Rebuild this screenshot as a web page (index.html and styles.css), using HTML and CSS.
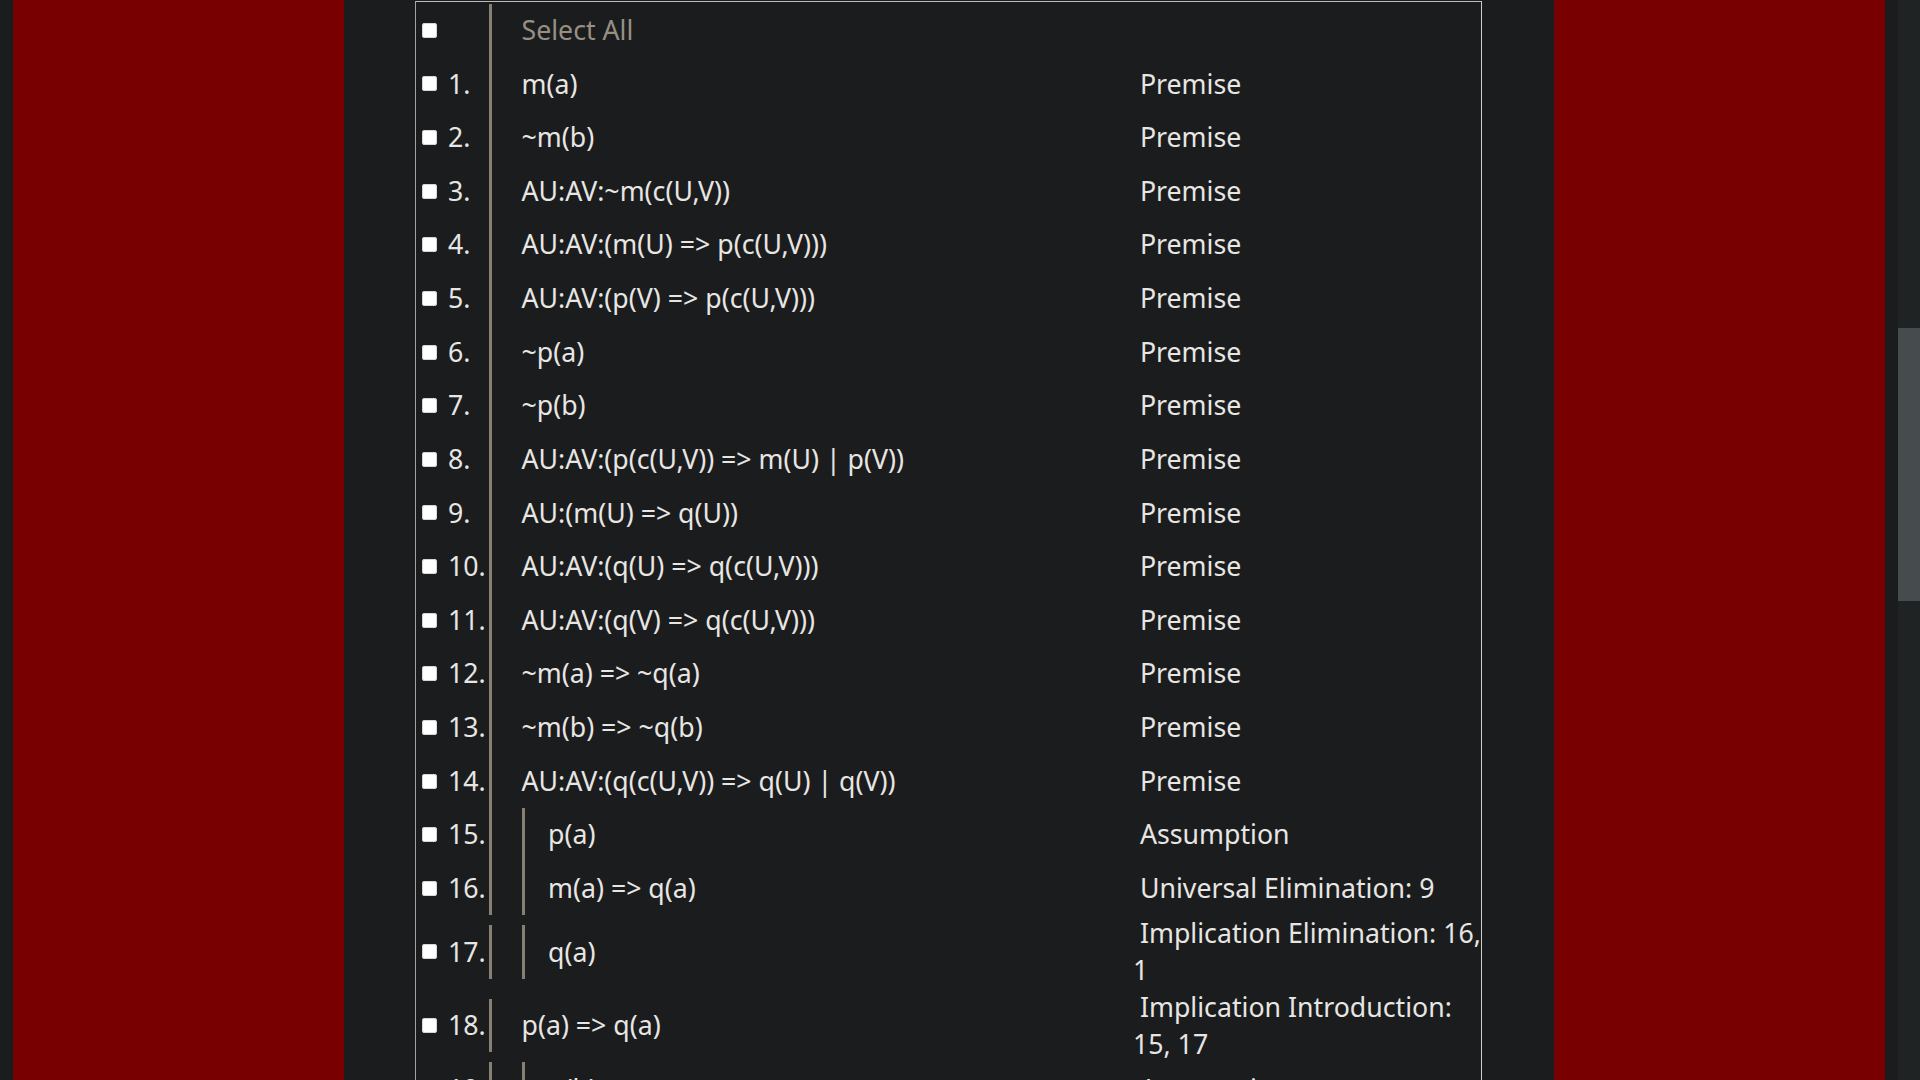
FILE: index.html
```html
<!DOCTYPE html>
<html lang="en">
<head>
<meta charset="utf-8">
<title>Proof</title>
<link rel="stylesheet" href="styles.css">
</head>
<body>
<div class="page">
  <div class="edge"></div>
  <div class="red"></div>
  <div class="gap"></div>
  <div class="proof">
    <div class="row">
      <div class="sel"><span class="box"></span></div>
      <div class="formula"><span class="all">Select All</span></div>
      <div class="just"></div>
    </div>
    <div class="row">
      <div class="sel"><span class="box"></span><span class="num">1.</span></div>
      <div class="formula">m(a)</div>
      <div class="just">&nbsp;Premise</div>
    </div>
    <div class="row">
      <div class="sel"><span class="box"></span><span class="num">2.</span></div>
      <div class="formula">~m(b)</div>
      <div class="just">&nbsp;Premise</div>
    </div>
    <div class="row">
      <div class="sel"><span class="box"></span><span class="num">3.</span></div>
      <div class="formula">AU:AV:~m(c(U,V))</div>
      <div class="just">&nbsp;Premise</div>
    </div>
    <div class="row">
      <div class="sel"><span class="box"></span><span class="num">4.</span></div>
      <div class="formula">AU:AV:(m(U) =&gt; p(c(U,V)))</div>
      <div class="just">&nbsp;Premise</div>
    </div>
    <div class="row">
      <div class="sel"><span class="box"></span><span class="num">5.</span></div>
      <div class="formula">AU:AV:(p(V) =&gt; p(c(U,V)))</div>
      <div class="just">&nbsp;Premise</div>
    </div>
    <div class="row">
      <div class="sel"><span class="box"></span><span class="num">6.</span></div>
      <div class="formula">~p(a)</div>
      <div class="just">&nbsp;Premise</div>
    </div>
    <div class="row">
      <div class="sel"><span class="box"></span><span class="num">7.</span></div>
      <div class="formula">~p(b)</div>
      <div class="just">&nbsp;Premise</div>
    </div>
    <div class="row">
      <div class="sel"><span class="box"></span><span class="num">8.</span></div>
      <div class="formula">AU:AV:(p(c(U,V)) =&gt; m(U) | p(V))</div>
      <div class="just">&nbsp;Premise</div>
    </div>
    <div class="row">
      <div class="sel"><span class="box"></span><span class="num">9.</span></div>
      <div class="formula">AU:(m(U) =&gt; q(U))</div>
      <div class="just">&nbsp;Premise</div>
    </div>
    <div class="row">
      <div class="sel"><span class="box"></span><span class="num">10.</span></div>
      <div class="formula">AU:AV:(q(U) =&gt; q(c(U,V)))</div>
      <div class="just">&nbsp;Premise</div>
    </div>
    <div class="row">
      <div class="sel"><span class="box"></span><span class="num">11.</span></div>
      <div class="formula">AU:AV:(q(V) =&gt; q(c(U,V)))</div>
      <div class="just">&nbsp;Premise</div>
    </div>
    <div class="row">
      <div class="sel"><span class="box"></span><span class="num">12.</span></div>
      <div class="formula">~m(a) =&gt; ~q(a)</div>
      <div class="just">&nbsp;Premise</div>
    </div>
    <div class="row">
      <div class="sel"><span class="box"></span><span class="num">13.</span></div>
      <div class="formula">~m(b) =&gt; ~q(b)</div>
      <div class="just">&nbsp;Premise</div>
    </div>
    <div class="row">
      <div class="sel"><span class="box"></span><span class="num">14.</span></div>
      <div class="formula">AU:AV:(q(c(U,V)) =&gt; q(U) | q(V))</div>
      <div class="just">&nbsp;Premise</div>
    </div>
    <div class="row">
      <div class="sel"><span class="box"></span><span class="num">15.</span></div>
      <div class="formula"><div class="nest">p(a)</div></div>
      <div class="just">&nbsp;Assumption</div>
    </div>
    <div class="row">
      <div class="sel"><span class="box"></span><span class="num">16.</span></div>
      <div class="formula"><div class="nest">m(a) =&gt; q(a)</div></div>
      <div class="just">&nbsp;Universal Elimination: 9</div>
    </div>
    <div class="row">
      <div class="sel"><span class="box"></span><span class="num">17.</span></div>
      <div class="formula"><div class="nest">q(a)</div></div>
      <div class="just">&nbsp;Implication Elimination: 16, 1</div>
    </div>
    <div class="row">
      <div class="sel"><span class="box"></span><span class="num">18.</span></div>
      <div class="formula">p(a) =&gt; q(a)</div>
      <div class="just">&nbsp;Implication Introduction: 15, 17</div>
    </div>
    <div class="row">
      <div class="sel"><span class="box"></span><span class="num">19.</span></div>
      <div class="formula"><div class="nest">p(b)</div></div>
      <div class="just">&nbsp;Assumption</div>
    </div>
    <div class="row">
      <div class="sel"><span class="box"></span><span class="num">20.</span></div>
      <div class="formula"><div class="nest">m(b) =&gt; q(b)</div></div>
      <div class="just">&nbsp;Universal Elimination: 9</div>
    </div>
  </div>
  <div class="gap gap-right"></div>
  <div class="red"></div>
  <div class="edge"></div>
  <div class="scroll"><div class="thumb"></div></div>
</div>
</body>
</html>
```

FILE: styles.css
```css
* {
  box-sizing: border-box;
}

html, body {
  margin: 0;
  padding: 0;
  overflow: hidden;
  background: #1b1c1e;
}

body {
  font-family: "Noto Sans", "Open Sans", sans-serif;
  color: #e8e6e3;
}

.page {
  display: flex;
  height: 1080px;
  overflow: hidden;
}

.edge {
  width: 13px;
  flex: none;
}

.red {
  width: 331px;
  flex: none;
  background: #790000;
}

.gap {
  width: 71px;
  flex: none;
}

.gap-right {
  width: 72px;
}

.proof {
  width: 1067px;
  flex: none;
  align-self: flex-start;
  margin-top: 1px;
  padding-top: 1.5px;
  border-top: 1px solid #bdbdbd;
  border-left: 1px solid #a3a3a3;
  border-right: 1px solid #d0d0d0;
  font-size: 26.7px;
}

.row {
  display: flex;
  align-items: center;
}

.sel {
  width: 73px;
  flex: none;
  padding-left: 6px;
  display: flex;
  align-items: center;
  line-height: 36.8px;
}

.box {
  width: 15px;
  height: 15px;
  flex: none;
  background: #ffffff;
  border-radius: 3px;
  box-shadow: inset 0 0 0 1px #d6d6d6;
}

.num {
  margin-left: 11px;
  white-space: nowrap;
}

.formula {
  width: 644px;
  flex: none;
  height: 53.64px;
  border-left: 3px solid #877f73;
  padding-left: 29.5px;
  display: flex;
  align-items: center;
  white-space: nowrap;
  line-height: 36.8px;
}

.nest {
  height: 100%;
  border-left: 3px solid #877f73;
  padding-left: 23.5px;
  display: flex;
  align-items: center;
}

.all {
  color: #988f83;
}

.just {
  flex: 1;
  min-width: 0;
  margin-right: -3px;
  line-height: 36.8px;
}

.scroll {
  width: 22px;
  flex: none;
  background: #202324;
}

.thumb {
  margin-top: 328px;
  height: 273px;
  background: #464b4e;
}
```
